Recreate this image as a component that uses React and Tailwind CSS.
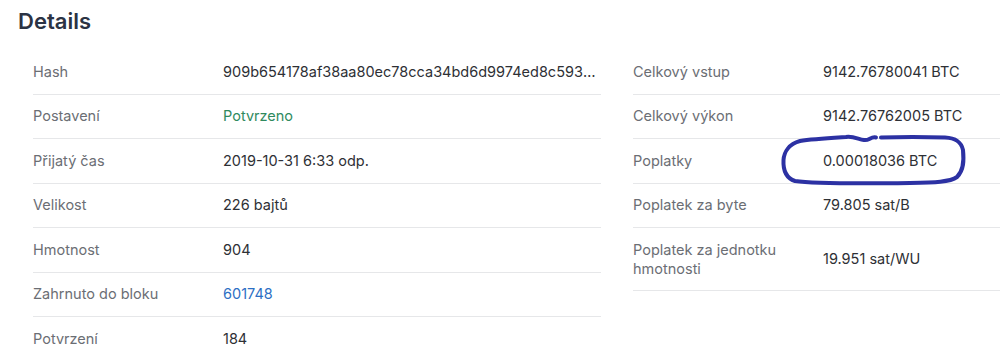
import React from "react";

const leftRows = [
  { label: "Hash", value: "909b654178af38aa80ec78cca34bd6d9974ed8c5935e0f41d6c2b7a1e8f3d2c90" , truncate: true },
  { label: "Postavení", value: "Potvrzeno", tone: "green" },
  { label: "Přijatý čas", value: "2019-10-31 6:33 odp." },
  { label: "Velikost", value: "226 bajtů" },
  { label: "Hmotnost", value: "904" },
  { label: "Zahrnuto do bloku", value: "601748", tone: "blue" },
  { label: "Potvrzení", value: "184", last: true },
];

const rightRows = [
  { label: "Celkový vstup", value: "9142.76780041 BTC" },
  { label: "Celkový výkon", value: "9142.76762005 BTC" },
  { label: "Poplatky", value: "0.00018036 BTC" },
  { label: "Poplatek za byte", value: "79.805 sat/B" },
  { label: "Poplatek za jednotku hmotnosti", value: "19.951 sat/WU", wrap: true },
];

const Row = ({ row }) => {
  const tone =
    row.tone === "green"
      ? "text-[#2f8a5e]"
      : row.tone === "blue"
      ? "text-[#2d6fc4]"
      : "text-[#2e3035]";

  return (
    <div
      className={`flex items-center py-[11.75px] ${
        row.last ? "" : "border-b border-[#e6e7e9]"
      }`}
    >
      <div
        className={`w-[190px] shrink-0 pr-3 text-[#6b6e74] ${
          row.wrap ? "leading-[19px]" : "leading-5"
        }`}
      >
        {row.label}
      </div>
      <div className={`min-w-0 flex-1 leading-5 ${tone} ${row.truncate ? "truncate" : "pr-2"}`}>
        {row.value}
      </div>
    </div>
  );
};

const Scribble = () => (
  <svg
    className="pointer-events-none absolute left-0 top-0"
    width="1000"
    height="358"
    viewBox="0 0 1000 358"
    fill="none"
  >
    <path
      d="M876 137.5 C871 136 869 141 864 140 C858 139 853 136 846 137 C830 138 812 139 800 141 C789 144 784 152 783.5 160 C783 170 786 178 795 181 C815 184 870 183.5 910 183 C935 182.5 950 182 957 177 C964 170 964 160 963 150 C961 141 955 138 945 137.5 C925 137 900 137 881 137.5"
      stroke="#2c31a3"
      strokeWidth="4"
      strokeLinecap="round"
      strokeLinejoin="round"
    />
  </svg>
);

export default function App() {
  return (
    <div className="relative h-[358px] w-[1000px] overflow-hidden bg-white font-['Inter',sans-serif] text-[14.5px]">
      <div className="w-[1240px] px-[18px]">
        <h1 className="pt-[7px] text-[22px] font-semibold leading-7 text-[#2b3344]">
          Details
        </h1>
        <div className="mt-[15px] grid grid-cols-[568px_568px] gap-8 px-[15px]">
          <div className="flex flex-col">
            {leftRows.map((r) => (
              <Row key={r.label} row={r} />
            ))}
          </div>
          <div className="flex flex-col">
            {rightRows.map((r) => (
              <Row key={r.label} row={r} />
            ))}
          </div>
        </div>
      </div>
      <Scribble />
    </div>
  );
}
